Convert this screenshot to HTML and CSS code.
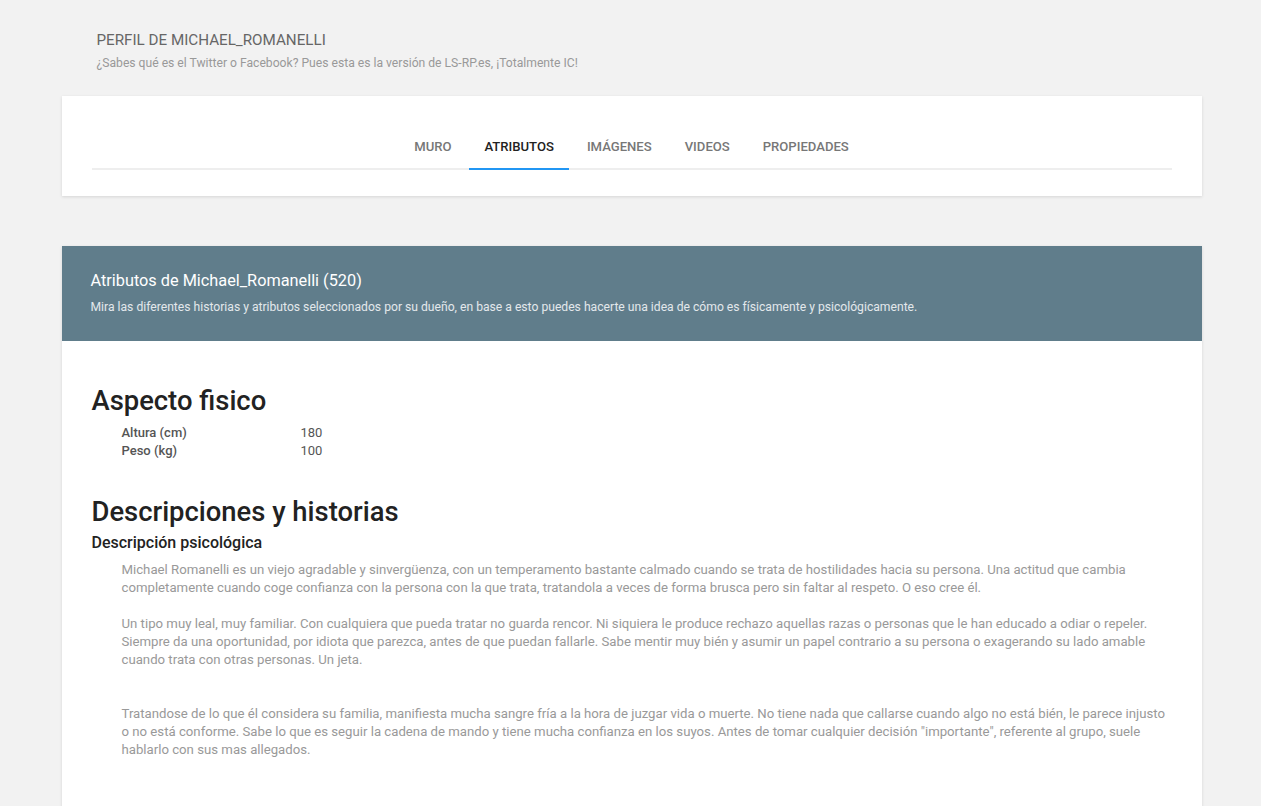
FILE: index.html
```html
<!DOCTYPE html>
<html lang="es">
<head>
    <meta charset="UTF-8">
    <meta name="viewport" content="width=device-width, initial-scale=1.0">
    <title>Perfil de Michael_Romanelli</title>
    <link rel="stylesheet" href="styles.css">
</head>
<body>

    <div class="container">
        <div class="page-header">
            <h1>Perfil de Michael_Romanelli</h1>
            <p>¿Sabes qué es el Twitter o Facebook? Pues esta es la versión de LS-RP.es, ¡Totalmente IC!</p>
        </div>

        <div class="card nav-card">
            <ul class="tabs">
                <li><a href="#">Muro</a></li>
                <li class="active"><a href="#">Atributos</a></li>
                <li><a href="#">Imágenes</a></li>
                <li><a href="#">Videos</a></li>
                <li><a href="#">Propiedades</a></li>
            </ul>
        </div>

        <div class="card attr-card">
            <div class="attr-header">
                <h2>Atributos de Michael_Romanelli (520)</h2>
                <p>Mira las diferentes historias y atributos seleccionados por su dueño, en base a esto puedes hacerte una idea de cómo es físicamente y psicológicamente.</p>
            </div>

            <div class="attr-body">
                <h3>Aspecto fisico</h3>
                <table class="stats">
                    <tr><th>Altura (cm)</th><td>180</td></tr>
                    <tr><th>Peso (kg)</th><td>100</td></tr>
                </table>

                <h3>Descripciones y historias</h3>
                <h4>Descripción psicológica</h4>
                <p class="story">Michael Romanelli es un viejo agradable y sinvergüenza, con un temperamento bastante calmado cuando se trata de hostilidades hacia su persona. Una actitud que cambia completamente cuando coge confianza con la persona con la que trata, tratandola a veces de forma brusca pero sin faltar al respeto. O eso cree él.<br><br>Un tipo muy leal, muy familiar. Con cualquiera que pueda tratar no guarda rencor. Ni siquiera le produce rechazo aquellas razas o personas que le han educado a odiar o repeler. Siempre da una oportunidad, por idiota que parezca, antes de que puedan fallarle. Sabe mentir muy bién y asumir un papel contrario a su persona o exagerando su lado amable cuando trata con otras personas. Un jeta.<br><br><br>Tratandose de lo que él considera su familia, manifiesta mucha sangre fría a la hora de juzgar vida o muerte. No tiene nada que callarse cuando algo no está bién, le parece injusto o no está conforme. Sabe lo que es seguir la cadena de mando y tiene mucha confianza en los suyos. Antes de tomar cualquier decisión "importante", referente al grupo, suele hablarlo con sus mas allegados.</p>
            </div>
        </div>
    </div>

</body>
</html>
```

FILE: styles.css
```css
body {
    font-family: Roboto, "Liberation Sans", sans-serif;
    background-color: #f2f2f2;
    margin: 0;
    padding: 0;
    color: #333;
}

.container {
    width: 1140px;
    margin: 0 auto;
    padding-left: 2px;
}

.page-header {
    padding: 31px 35px 25px;
}

.page-header h1 {
    margin: 0;
    font-size: 15.2px;
    font-weight: 400;
    color: #666;
    text-transform: uppercase;
    line-height: 18px;
}

.page-header p {
    margin: 6px 0 0;
    font-size: 12.15px;
    color: #999;
    line-height: 16px;
}

.card {
    background-color: #fff;
    box-shadow: 0 1px 3px rgba(0, 0, 0, 0.12);
}

.nav-card {
    padding: 30px 30px 26px;
    margin-bottom: 50px;
}

.tabs {
    list-style: none;
    margin: 0;
    padding: 0;
    display: flex;
    justify-content: center;
    gap: 3px;
    border-bottom: 2px solid #eee;
}

.tabs li a {
    display: block;
    padding: 12px 15px 13px;
    font-size: 13.1px;
    font-weight: 500;
    color: #777;
    text-transform: uppercase;
    text-decoration: none;
    line-height: 17px;
    margin-bottom: -2px;
    border-bottom: 2px solid transparent;
}

.tabs li.active a {
    color: #222;
    border-bottom-color: #2196f3;
}

.attr-header {
    background-color: #607d8b;
    padding: 25px 29px 26px;
    color: #fff;
}

.attr-header h2 {
    margin: 0;
    font-size: 16.3px;
    font-weight: 400;
    line-height: 20px;
}

.attr-header p {
    margin: 8px 0 0;
    font-size: 12.15px;
    color: #e3e8eb;
    line-height: 16px;
}

.attr-body {
    padding: 43px 30px 70px;
}

.attr-body h3 {
    margin: 0;
    font-size: 27.4px;
    font-weight: 500;
    color: #222;
    line-height: 34px;
}

.stats {
    border-collapse: collapse;
    margin: 6px 0 35px 30px;
    font-size: 13px;
}

.stats th {
    text-align: left;
    font-weight: 500;
    color: #555;
    width: 179px;
    padding: 0;
    line-height: 18px;
}

.stats td {
    color: #555;
    padding: 0;
    line-height: 18px;
}

.attr-body h4 {
    margin: 3px 0 7px;
    font-size: 16px;
    font-weight: 500;
    color: #222;
    line-height: 22px;
}

.story {
    margin: 0 0 0 30px;
    font-size: 13.2px;
    color: #999;
    line-height: 18px;
}
```
